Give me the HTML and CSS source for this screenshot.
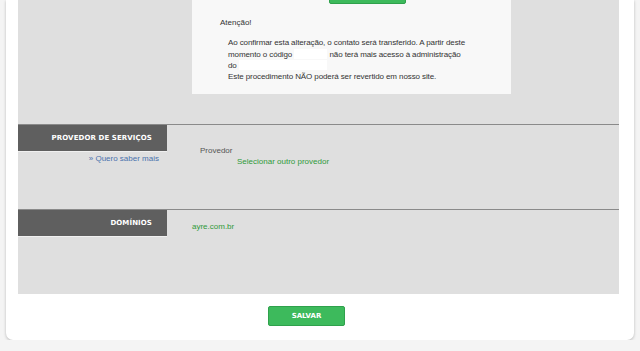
FILE: index.html
```html
<!DOCTYPE html>
<html lang="pt-BR">
<head>
    <meta charset="UTF-8">
    <title>Alterar provedor</title>
    <link rel="stylesheet" href="styles.css">
</head>
<body>
    <div class="card">
        <div class="panel">
            <div class="dialog-row">
                <div class="dialog">
                    <div class="dialog-top">
                        <button class="btn btn-confirm" aria-label="Confirmar"></button>
                    </div>
                    <p class="warn-title">Atenção!</p>
                    <p class="warn-text">
                        Ao confirmar esta alteração, o contato será transferido. A partir deste<br>
                        momento o código <span class="blank blank-code"></span> não terá mais acesso à administração<br>
                        do <span class="blank blank-domain"></span><br>
                        Este procedimento NÃO poderá ser revertido em nosso site.
                    </p>
                </div>
            </div>

            <div class="section">
                <div class="side">
                    <div class="side-title">PROVEDOR DE SERVIÇOS</div>
                    <a class="side-link" href="#">» Quero saber mais</a>
                </div>
                <div class="content content-provider">
                    <div class="label">Provedor</div>
                    <a class="green-link" href="#">Selecionar outro provedor</a>
                </div>
            </div>

            <div class="section">
                <div class="side">
                    <div class="side-title">DOMÍNIOS</div>
                </div>
                <div class="content">
                    <a class="green-link domain" href="#">ayre.com.br</a>
                </div>
            </div>
        </div>

        <div class="actions">
            <button class="btn">SALVAR</button>
        </div>
    </div>
</body>
</html>
```

FILE: styles.css
```css
body {
    margin: 0;
    background: #f4f4f4;
    font-family: "Liberation Sans", Arial, sans-serif;
    font-size: 8px;
    color: #333;
}
.card {
    margin: 0 6px;
    height: 340px;
    box-sizing: border-box;
    padding: 0 15px 0 12px;
    background: #fff;
    border-radius: 0 0 7px 7px;
    box-shadow: 0 1px 3px rgba(0, 0, 0, 0.25);
}
.panel {
    background: #dfdfdf;
}
.dialog-row {
    height: 124px;
    padding-left: 174px;
    box-sizing: border-box;
}
.dialog {
    width: 319px;
    height: 94px;
    box-sizing: border-box;
    background: #f8f8f8;
    padding: 0 0 0 28px;
    overflow: hidden;
}
.dialog-top {
    display: flow-root;
    height: 5px;
    padding-left: 109px;
}
.btn-confirm {
    display: block;
    margin-top: -16px;
}
.warn-title {
    margin: 12px 0 10px;
    line-height: 11px;
}
.warn-text {
    margin: 0;
    padding-left: 8px;
    line-height: 10.7px;
    white-space: nowrap;
    letter-spacing: -0.1px;
}
.blank {
    display: inline-block;
    height: 10px;
    vertical-align: -2px;
    background: #fff;
}
.blank-code {
    width: 33px;
}
.blank-domain {
    width: 88px;
}
.section {
    display: flex;
    height: 85px;
    box-sizing: border-box;
    border-top: 1px solid #8a8a8a;
}
.side {
    width: 149px;
    display: flex;
    flex-direction: column;
    align-items: stretch;
}
.side-title {
    height: 27px;
    box-sizing: border-box;
    padding: 9px 15px 0 0;
    text-align: right;
    background: #5f5f5f;
    border-bottom: 1px solid #f0f0f0;
    color: #fff;
    font-family: "DejaVu Sans", sans-serif;
    font-weight: bold;
    font-size: 7px;
    letter-spacing: 0.1px;
}
.side-link {
    margin-top: 2px;
    padding-right: 8px;
    text-align: right;
    color: #4a72ad;
    text-decoration: none;
    line-height: 10px;
}
.content {
    padding: 12px 0 0 25px;
}
.content-provider {
    padding: 21px 0 0 33px;
}
.label {
    color: #555;
    line-height: 10px;
}
.green-link {
    display: block;
    color: #2f9a3a;
    text-decoration: none;
    line-height: 10px;
}
.content-provider .green-link {
    margin-left: 37px;
    margin-top: 1px;
}
.actions {
    padding: 12px 0 0 250px;
}
.btn {
    width: 77px;
    height: 20px;
    background: #3dba5c;
    border: 1px solid #2fa14c;
    border-radius: 2px;
    color: #fff;
    font-family: "DejaVu Sans", sans-serif;
    font-weight: bold;
    font-size: 7px;
    padding: 0;
    cursor: pointer;
}
```
